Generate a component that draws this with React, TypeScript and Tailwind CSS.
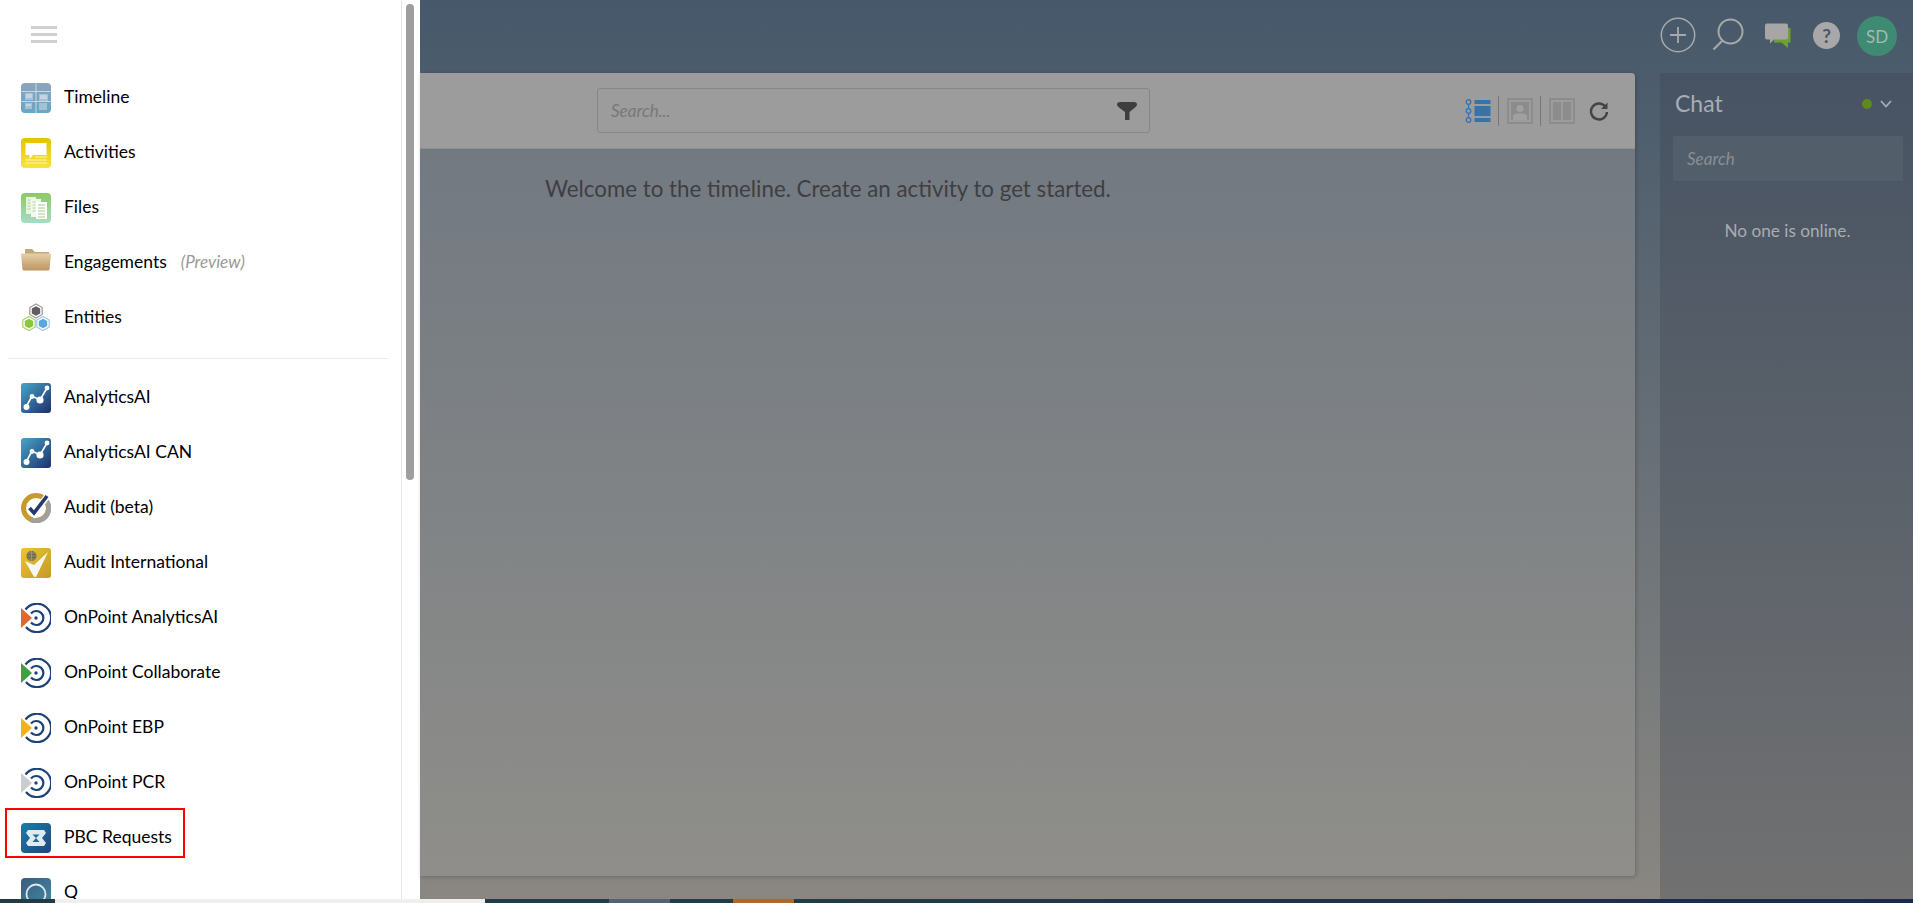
import React from "react";

const Tile = ({ children }: { children: React.ReactNode }) => (
  <svg width="30" height="30" viewBox="0 0 30 30" className="shrink-0">{children}</svg>
);

const TimelineIcon = () => (
  <Tile>
    <defs><linearGradient id="tl" x1="0" y1="0" x2="0" y2="1"><stop offset="0" stopColor="#8ba5bc" /><stop offset="1" stopColor="#67a6c8" /></linearGradient></defs>
    <rect width="30" height="30" rx="4" fill="url(#tl)" />
    <path d="M15 0V30M0 8.500H30M0 18.500H30" stroke="#c9d8e2" strokeWidth="1" />
    <path d="M4 10h8v7H4zM18 11h9v7h-9zM4 20h7v6H4zM18 20h8v7h-8z" fill="#b6cbd8" opacity=".75" />
    <path d="M5 12h6M5 14h6M19 13h7M19 15h7M5 22h5" stroke="#eef4f7" strokeWidth=".8" />
  </Tile>
);
const ActivitiesIcon = () => (
  <Tile>
    <defs><linearGradient id="ac" x1="0" y1="0" x2="0" y2="1"><stop offset="0" stopColor="#e2c300" /><stop offset="1" stopColor="#f7e43f" /></linearGradient></defs>
    <rect width="30" height="30" rx="4" fill="url(#ac)" />
    <path d="M4.500 5H25.500V17H12L8.500 21V17H4.500Z" fill="#fff" />
    <path d="M14 19H26M4.500 22H26M4.500 25H26" stroke="#fff7b0" strokeWidth="1" />
  </Tile>
);
const FilesIcon = () => (
  <Tile>
    <defs><linearGradient id="fi" x1="0" y1="0" x2="0" y2="1"><stop offset="0" stopColor="#90c862" /><stop offset="1" stopColor="#a5dcc6" /></linearGradient></defs>
    <rect width="30" height="30" rx="4" fill="url(#fi)" />
    <path d="M5 4h10v17H5z" fill="#e9f5e2" />
    <path d="M10 6h10v18H10z" fill="#f2f9ee" />
    <path d="M15 9h11v17H15z" fill="#fff" />
    <path d="M17 12h7M17 15h7M17 18h7M17 21h7M17 24h7" stroke="#9ccf8a" strokeWidth="1" />
    <path d="M6.500 7h3M6.500 10h3M6.500 13h3M6.500 16h3M11.500 9h3M11.500 12h3M11.500 15h3M11.500 18h3" stroke="#a9d69a" strokeWidth="1" />
  </Tile>
);
const FolderIcon = () => (
  <Tile>
    <defs><linearGradient id="fo" x1="0" y1="0" x2="0" y2="1"><stop offset="0" stopColor="#e5cfa9" /><stop offset="1" stopColor="#bd9660" /></linearGradient></defs>
    <path d="M4 1H11L14 4H28V7H4Z" fill="#c5a877" />
    <path d="M0 5.500H30L28.500 21.500Q28.400 22.500 27 22.500H3Q1.600 22.500 1.500 21.500Z" fill="url(#fo)" />
  </Tile>
);
const Hex = ({ cx, cy, stroke, fill }: { cx: number; cy: number; stroke: string; fill: string }) => (
  <g>
    <path d={`M${cx} ${cy - 7}L${cx + 6.2} ${cy - 3.5}V${cy + 3.5}L${cx} ${cy + 7}L${cx - 6.2} ${cy + 3.5}V${cy - 3.5}Z`} fill="#fff" stroke={stroke} strokeWidth="1.200" />
    <path d={`M${cx} ${cy - 4.7}L${cx + 4.2} ${cy - 2.4}V${cy + 2.4}L${cx} ${cy + 4.7}L${cx - 4.2} ${cy + 2.4}V${cy - 2.4}Z`} fill={fill} />
  </g>
);
const EntitiesIcon = () => (
  <Tile>
    <Hex cx={15} cy={8} stroke="#9a9a9a" fill="#5e5e5e" />
    <Hex cx={8} cy={20.5} stroke="#a5d070" fill="#8cc63f" />
    <Hex cx={22} cy={20.5} stroke="#9cc8ea" fill="#5ba4dc" />
  </Tile>
);
const AnalyticsIcon = ({ id }: { id: string }) => (
  <Tile>
    <defs><linearGradient id={id} x1="0" y1="0" x2="1" y2="1"><stop offset="0.1" stopColor="#429bbf" /><stop offset="0.95" stopColor="#1f3570" /></linearGradient></defs>
    <rect width="30" height="30" rx="3" fill={`url(#${id})`} />
    <path d="M5 24L11 13L19 17L26 5" fill="none" stroke="#fff" strokeWidth="1.600" />
    <circle cx="5.500" cy="24" r="3" fill="#fff" />
    <circle cx="11" cy="13.500" r="2.400" fill="#fff" />
    <circle cx="19" cy="17" r="3.600" fill="#fff" />
    <circle cx="26" cy="5" r="2.400" fill="#fff" />
  </Tile>
);
const AuditBetaIcon = () => (
  <Tile>
    <circle cx="15" cy="15" r="12.500" fill="none" stroke="#c69a2b" strokeWidth="5" />
    <path d="M9.500 26.500A12.500 12.500 0 0 0 26 9" fill="none" stroke="#a0a0a2" strokeWidth="5" />
    <path d="M8 15.500L13 20.500L26 3.500" fill="none" stroke="#fff" strokeWidth="6.500" />
    <path d="M8.500 15L13 20L26 3" fill="none" stroke="#24396f" strokeWidth="3.600" />
  </Tile>
);
const AuditIntlIcon = () => (
  <Tile>
    <defs><linearGradient id="ai" x1="0" y1="0" x2="1" y2="1"><stop offset="0" stopColor="#e8c62e" /><stop offset="1" stopColor="#c8982a" /></linearGradient></defs>
    <rect width="30" height="30" rx="3" fill="url(#ai)" />
    <path d="M4 13L13 17L27 4L15 29Q13 29 12.500 28Z" fill="#f7f7f2" />
    <circle cx="10.500" cy="8" r="5" fill="#6a6a5c" />
    <path d="M5.500 8H15.500M10.500 3V13M6.500 5H14.500M6.500 11H14.500" stroke="#b3a85a" strokeWidth=".7" />
  </Tile>
);
const OnPointIcon = ({ color }: { color: string }) => (
  <Tile>
    <path d="M4.500 6.500A14.200 14.200 0 1 1 5 24" fill="none" stroke="#1c4279" strokeWidth="2.200" />
    <path d="M10 10.500A7 7 0 1 1 10 19.500" fill="none" stroke="#1c4279" strokeWidth="2.200" />
    <circle cx="15" cy="15" r="1.700" fill="#1c4279" />
    <path d="M0 5L11 15L0 25Z" fill={color} />
  </Tile>
);
const PbcIcon = () => (
  <Tile>
    <defs><linearGradient id="pb" x1="0" y1="0" x2="1" y2="1"><stop offset="0" stopColor="#1580a8" /><stop offset="1" stopColor="#22467e" /></linearGradient></defs>
    <rect width="30" height="30" rx="4" fill="url(#pb)" />
    <path d="M7 7H23L25 10L21 15L25 20L23 23H7L5 20L9 15L5 10Z" fill="#dfeaf1" />
    <path d="M11.500 11.500H18.500L15 15ZM15 15L18.500 19H11.500Z" fill="#1a6d9c" />
  </Tile>
);
const QIcon = () => (
  <Tile>
    <defs><linearGradient id="qq" x1="0" y1="0" x2="1" y2="1"><stop offset="0" stopColor="#3b5b7f" /><stop offset="1" stopColor="#3f8ba3" /></linearGradient></defs>
    <rect width="30" height="30" rx="4" fill="url(#qq)" />
    <circle cx="15" cy="16" r="9.500" fill="none" stroke="#dfe8ee" strokeWidth="1.800" />
    <path d="M17 22L22 28" stroke="#fff" strokeWidth="2" />
  </Tile>
);

const Row = ({ icon, label, extra }: { icon: React.ReactNode; label: string; extra?: string }) => (
  <div className="flex h-[55px] shrink-0 items-center gap-[13px] pl-[21px]">
    {icon}
    <span className="pb-[2px] text-[17.5px] leading-none text-black">{label}</span>
    {extra && <span className="ml-[1px] pb-[2px] text-[17px] italic leading-none text-[#9a9a9a]">{extra}</span>}
  </div>
);

const Sidebar = () => (
  <aside className="flex h-full w-[420px] shrink-0 bg-white">
    <div className="flex w-[402px] shrink-0 flex-col overflow-hidden border-r border-[#e5e5e5]">
      <div className="flex h-[70px] shrink-0 flex-col gap-[4px] pl-[31px] pt-[26px]">
        <div className="h-[3px] w-[26px] bg-[#d0d0d0]" />
        <div className="h-[3px] w-[26px] bg-[#d0d0d0]" />
        <div className="h-[3px] w-[26px] bg-[#d0d0d0]" />
      </div>
      <Row icon={<TimelineIcon />} label="Timeline" />
      <Row icon={<ActivitiesIcon />} label="Activities" />
      <Row icon={<FilesIcon />} label="Files" />
      <Row icon={<FolderIcon />} label="Engagements" extra="(Preview)" />
      <Row icon={<EntitiesIcon />} label="Entities" />
      <div className="mb-[11px] ml-[8px] mr-[13px] mt-[13px] h-[1px] shrink-0 bg-[#ebebeb]" />
      <Row icon={<AnalyticsIcon id="an1" />} label="AnalyticsAI" />
      <Row icon={<AnalyticsIcon id="an2" />} label="AnalyticsAI CAN" />
      <Row icon={<AuditBetaIcon />} label="Audit (beta)" />
      <Row icon={<AuditIntlIcon />} label="Audit International" />
      <Row icon={<OnPointIcon color="#e2672c" />} label="OnPoint AnalyticsAI" />
      <Row icon={<OnPointIcon color="#3f9f45" />} label="OnPoint Collaborate" />
      <Row icon={<OnPointIcon color="#f5b01e" />} label="OnPoint EBP" />
      <Row icon={<OnPointIcon color="#c9cdd2" />} label="OnPoint PCR" />
      <div className="relative shrink-0">
        <Row icon={<PbcIcon />} label="PBC Requests" />
        <div className="absolute left-[5px] top-[-2px] h-[50px] w-[180px] border-2 border-[#ff0000]" />
      </div>
      <Row icon={<QIcon />} label="Q" />
    </div>
    <div className="w-[18px] shrink-0 pl-[4px] pt-[4px]">
      <div className="h-[476px] w-[8px] rounded-full bg-[#9e9e9e]" />
    </div>
  </aside>
);

const HeaderIcons = () => (
  <header className="flex h-[73px] shrink-0 items-center justify-end pr-[16px]">
    <svg width="36" height="36" viewBox="0 0 36 36" className="mr-[16px] mt-[-3px]">
      <circle cx="18" cy="18" r="16.700" fill="none" stroke="#a8a8a8" strokeWidth="1.500" />
      <path d="M18 10V26M10 18H26" stroke="#a8a8a8" strokeWidth="1.800" />
    </svg>
    <svg width="32" height="34" viewBox="0 0 32 34" className="mr-[21px] mt-[-4px]">
      <circle cx="18.500" cy="13.500" r="12" fill="none" stroke="#a8a8a8" strokeWidth="2" />
      <path d="M10 23L1.500 31.500" stroke="#a8a8a8" strokeWidth="2.200" />
    </svg>
    <svg width="26" height="26" viewBox="0 0 26 26" className="mr-[22px] mt-[-2px]">
      <path d="M12 5H25.500V19.500H23V25L16.500 19.500H9V15H12Z" fill="#6fa12c" />
      <path d="M2 0.500H21Q23 0.500 23 2.500V14.500Q23 16.500 21 16.500H9L5 20.500V16.500H2Q0 16.500 0 14.500V2.500Q0 0.500 2 0.500Z" fill="#a6a6a6" />
    </svg>
    <div className="mr-[17px] mt-[-2px] flex h-[27px] w-[27px] items-center justify-center rounded-full bg-[#a8a8a8] text-[19px] font-bold leading-none text-[#46586a]">?</div>
    <div className="mt-[-1px] flex h-[40px] w-[40px] items-center justify-center rounded-full bg-[#3f8a72] text-[17px] leading-none text-[#a5b9b1]">SD</div>
  </header>
);

const ToolbarIcons = () => (
  <div className="flex items-center">
    <svg width="26" height="26" viewBox="0 0 26 26" className="mr-[7px]">
      <path d="M3.500 4V22" stroke="#3673a8" strokeWidth="1.200" />
      <circle cx="3.500" cy="4" r="2.300" fill="#9c9c9c" stroke="#3673a8" strokeWidth="1.300" />
      <circle cx="3.500" cy="13" r="2.300" fill="#9c9c9c" stroke="#3673a8" strokeWidth="1.300" />
      <circle cx="3.500" cy="22" r="2.300" fill="#9c9c9c" stroke="#3673a8" strokeWidth="1.300" />
      <rect x="9.500" y="2" width="16" height="4" fill="#3673a8" />
      <rect x="9.500" y="8" width="16" height="10" fill="#3673a8" />
      <rect x="9.500" y="20" width="16" height="4" fill="#3673a8" />
    </svg>
    <div className="mr-[8px] h-[30px] w-[1px] bg-[#777]" />
    <svg width="26" height="26" viewBox="0 0 26 26" className="mr-[7px]">
      <rect x="1" y="1" width="24" height="24" fill="none" stroke="#8c8c8c" strokeWidth="2" />
      <rect x="4" y="4" width="18" height="18" fill="#8c8c8c" />
      <circle cx="13" cy="10.500" r="3.500" fill="#a0a0a0" />
      <path d="M6 22V19Q6 15.500 10 15.500H16Q20 15.500 20 19V22Z" fill="#a0a0a0" />
    </svg>
    <div className="mr-[8px] h-[30px] w-[1px] bg-[#777]" />
    <svg width="26" height="26" viewBox="0 0 26 26" className="mr-[14px]">
      <rect x="1" y="1" width="24" height="24" fill="none" stroke="#8c8c8c" strokeWidth="2" />
      <rect x="4" y="4" width="8" height="18" fill="#8c8c8c" />
      <rect x="14" y="4" width="8" height="18" fill="#8c8c8c" />
    </svg>
    <svg width="20" height="20" viewBox="0 0 20 20">
      <path d="M16.300 5.500A8 8 0 1 0 18 11" fill="none" stroke="#444" strokeWidth="2.400" />
      <path d="M18.500 1.500V8H12Z" fill="#444" />
    </svg>
  </div>
);

const Card = () => (
  <section className="flex w-[1215px] shrink-0 flex-col overflow-hidden rounded-r-[4px] bg-gradient-to-b from-[#6f7780] to-[#8f8e8a] shadow-[1px_1px_4px_rgba(0,0,0,0.2)]">
    <div className="flex h-[76px] shrink-0 items-center border-b border-[#8f8f8f] bg-[#9c9c9c] pl-[177px] pr-[26px]">
      <div className="flex h-[45px] w-[553px] items-center justify-between rounded-[3px] border border-[#868686] pl-[13px] pr-[12px]">
        <span className="text-[17px] italic leading-none text-[#787878]">Search...</span>
        <svg width="20" height="18" viewBox="0 0 20 18">
          <path d="M0 2.500Q0 0 3 0H17Q20 0 20 2.500Q20 4 18 5.500L12.500 10V18H8V10L2 5.500Q0 4 0 2.500Z" fill="#3e3e3e" />
        </svg>
      </div>
      <div className="flex-1" />
      <ToolbarIcons />
    </div>
    <div className="pl-[125px] pt-[27px] text-[22.3px] leading-[26px] text-[#3f3f42]">
      Welcome to the timeline. Create an activity to get started.
    </div>
  </section>
);

const Chat = () => (
  <aside className="flex h-full w-[253px] shrink-0 flex-col bg-gradient-to-b from-[#475363] to-[#717171]">
    <div className="flex h-[63px] shrink-0 items-center justify-between pb-[2px] pl-[15px] pr-[21px]">
      <span className="text-[23px] leading-none text-[#a5aeb5]">Chat</span>
      <div className="flex items-center gap-[8px]">
        <div className="ml-[1px] h-[10px] w-[10px] rounded-full bg-[#5f8a1a]" />
        <svg width="12" height="8" viewBox="0 0 12 8"><path d="M1 1L6 6.500L11 1" fill="none" stroke="#a5aeb5" strokeWidth="1.800" /></svg>
      </div>
    </div>
    <div className="ml-[13px] flex h-[45px] w-[230px] shrink-0 items-center rounded-[2px] bg-[#535e6b] pl-[14px] text-[17px] italic leading-none text-[#8a8f93]">Search</div>
    <div className="pl-[2px] pt-[40px] text-center text-[17.2px] leading-[20px] text-[#a8adb0]">No one is online.</div>
  </aside>
);

export default function App() {
  return (
    <div className="flex h-[903px] w-[1913px] flex-col overflow-hidden font-['Lato','Liberation_Sans',sans-serif]">
      <div className="flex min-h-0 flex-1">
        <Sidebar />
        <main className="flex min-w-0 flex-1 flex-col bg-gradient-to-b from-[#46586a] to-[#8a8782]">
          <HeaderIcons />
          <div className="flex min-h-0 flex-1 gap-[25px]">
            <div className="flex h-[803px] shrink-0">
              <Card />
            </div>
            <Chat />
          </div>
        </main>
      </div>
      <div className="flex h-[4px] shrink-0">
        <div className="w-[55px] bg-[#223a44]" />
        <div className="w-[430px] bg-[#efefef]" />
        <div className="w-[124px] bg-[#233b45]" />
        <div className="w-[61px] bg-[#4f646e]" />
        <div className="w-[63px] bg-[#233b45]" />
        <div className="w-[61px] bg-[#a96a32]" />
        <div className="flex-1 bg-gradient-to-r from-[#233b45] to-[#1b2a4c]" />
      </div>
    </div>
  );
}
